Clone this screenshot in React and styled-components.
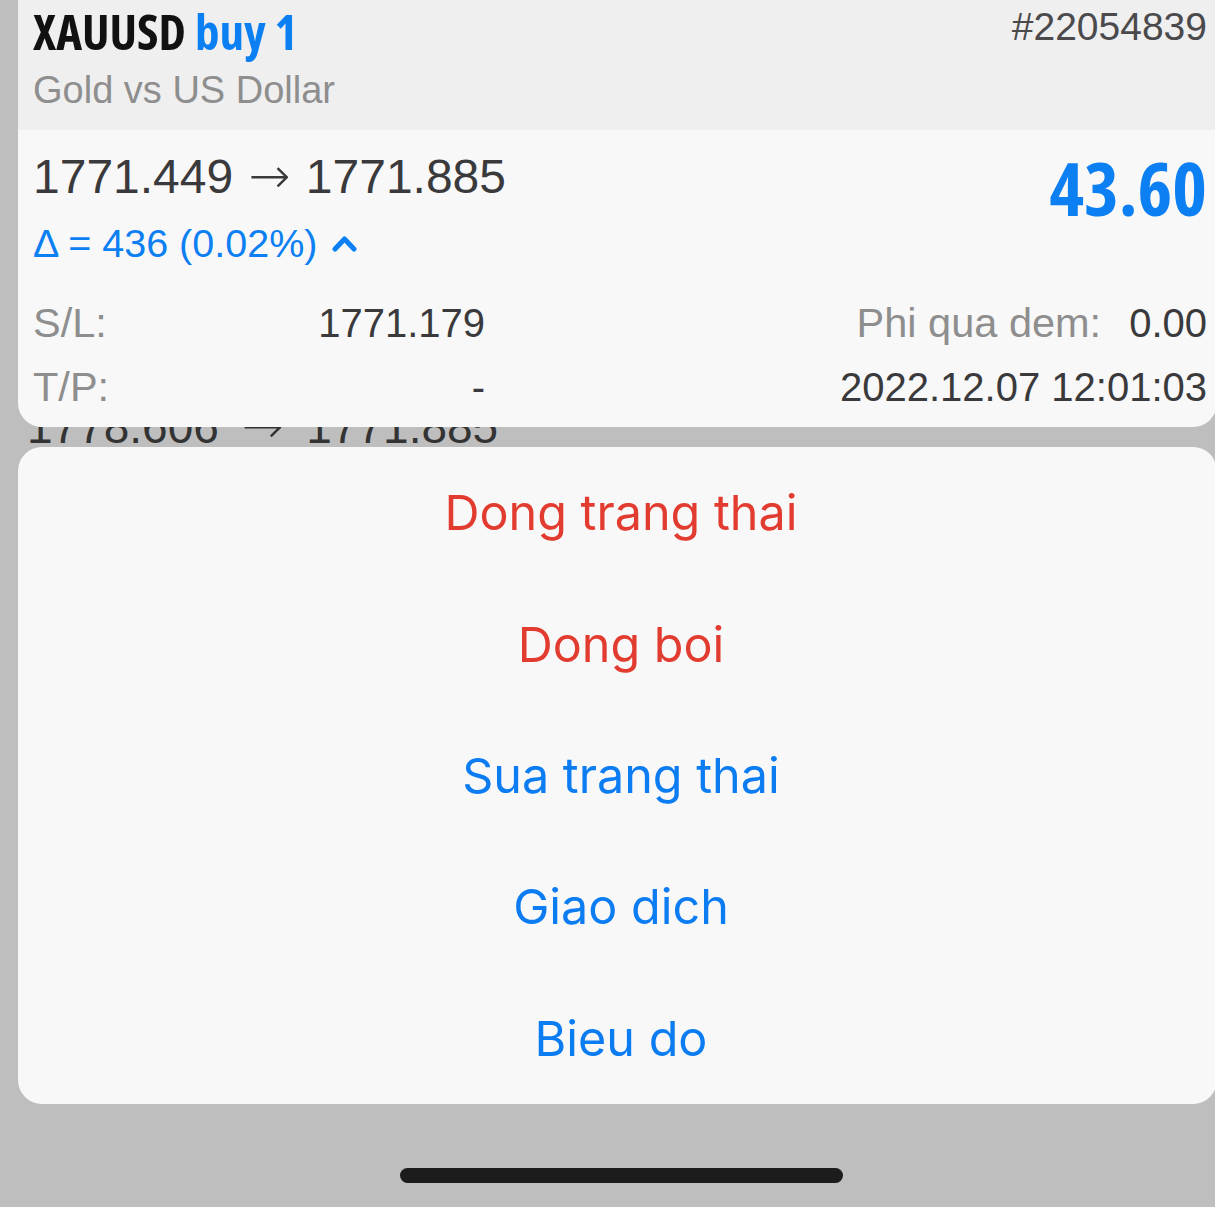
import React from "react";
import styled, { createGlobalStyle } from "styled-components";

const GlobalStyle = createGlobalStyle`
  html, body {
    margin: 0;
    padding: 0;
    background: #bebebe;
    overflow-x: hidden;
  }
  body {
    font-family: "Liberation Sans", Arial, sans-serif;
  }
`;

const Screen = styled.div`
  width: 1215px;
  height: 1207px;
  background: #bebebe;
  display: flex;
  flex-direction: column;
  overflow: hidden;
`;

const Card = styled.div`
  position: relative;
  z-index: 1;
  margin-left: 18px;
  width: 1199px;
  border-radius: 0 0 24px 24px;
  overflow: hidden;
`;

const Header = styled.div`
  height: 130px;
  box-sizing: border-box;
  background: #efefef;
  padding: 0 10px 0 15px;
  display: flex;
  justify-content: space-between;
  align-items: flex-start;
`;

const Title = styled.div`
  font-family: "Open Sans", "DejaVu Sans Condensed", sans-serif;
  font-stretch: 75%;
  font-weight: 700;
  font-size: 49px;
  line-height: 62px;
  color: #111;
  span {
    color: #0c7ff2;
    margin-left: 9px;
  }
`;

const Subtitle = styled.div`
  margin-top: 5px;
  font-size: 38px;
  line-height: 46px;
  color: #8e8e8e;
`;

const Ticket = styled.div`
  padding-top: 4px;
  font-size: 39px;
  line-height: 46px;
  color: #4a4a4c;
`;

const Body = styled.div`
  height: 297px;
  box-sizing: border-box;
  background: #f8f8f8;
  padding: 0 10px 0 15px;
`;

const TopRow = styled.div`
  display: flex;
  justify-content: space-between;
  align-items: flex-start;
`;

const Prices = styled.div`
  padding-top: 18px;
  font-size: 48px;
  line-height: 56px;
  color: #3a3a3c;
  white-space: nowrap;
`;

const Arrow = styled.span`
  font-family: "DejaVu Sans", sans-serif;
  font-weight: 300;
  font-size: 50px;
  margin: 0 2px;
`;

const Delta = styled.div`
  margin-top: 15px;
  font-size: 39.5px;
  line-height: 46px;
  color: #0c7ff2;
  display: flex;
  align-items: center;
  gap: 15px;
`;

const Profit = styled.div`
  padding-top: 18px;
  font-family: "Open Sans", "DejaVu Sans Condensed", sans-serif;
  font-stretch: 75%;
  font-weight: 700;
  font-size: 74px;
  line-height: 80px;
  color: #0c7ff2;
`;

const Info = styled.div`
  margin-top: 25px;
  display: grid;
  grid-template-columns: 452px 1fr;
  grid-auto-rows: 64px;
  font-size: 40px;
  line-height: 64px;
  color: #3a3a3c;
`;

const Pair = styled.div`
  display: flex;
  justify-content: ${(p) => (p.$end ? "flex-end" : "space-between")};
  gap: 28px;
  white-space: nowrap;
`;

const Label = styled.span`
  color: #8e8e8e;
  font-size: 41.5px;
`;

const Strip = styled.div`
  height: 20px;
  overflow: hidden;
  display: flex;
  align-items: flex-end;
  padding-left: 27px;
`;

const Ghost = styled.div`
  font-size: 46px;
  line-height: 48px;
  margin-bottom: -4px;
  color: #333;
  white-space: nowrap;
  word-spacing: 8px;
`;

const Sheet = styled.div`
  margin-left: 18px;
  width: 1199px;
  background: #f8f8f8;
  border-radius: 24px;
  display: flex;
  flex-direction: column;
`;

const Action = styled.div`
  height: 131.4px;
  display: flex;
  align-items: center;
  justify-content: center;
  padding-left: 7px;
  font-family: Inter, "Liberation Sans", sans-serif;
  font-size: 48.5px;
  color: ${(p) => (p.$danger ? "#e23b2f" : "#0c7cf2")};
`;

const HomeBar = styled.div`
  margin: 64px 0 0 400px;
  width: 443px;
  height: 15px;
  border-radius: 8px;
  background: #1c1c1c;
`;

const ChevronUp = () => (
  <svg width="25" height="18" viewBox="0 0 25 18">
    <polyline
      points="3,15 12.5,5 22,15"
      fill="none"
      stroke="#0c7ff2"
      strokeWidth="5"
      strokeLinecap="round"
      strokeLinejoin="round"
    />
  </svg>
);

const actions = [
  { label: "Dong trang thai", danger: true },
  { label: "Dong boi", danger: true },
  { label: "Sua trang thai" },
  { label: "Giao dich" },
  { label: "Bieu do" },
];

export default function App() {
  return (
    <>
      <GlobalStyle />
      <Screen>
        <Card>
          <Header>
            <div>
              <Title>
                XAUUSD<span>buy 1</span>
              </Title>
              <Subtitle>Gold vs US Dollar</Subtitle>
            </div>
            <Ticket>#22054839</Ticket>
          </Header>
          <Body>
            <TopRow>
              <div>
                <Prices>
                  1771.449 <Arrow>→</Arrow> 1771.885
                </Prices>
                <Delta>
                  Δ = 436 (0.02%)
                  <ChevronUp />
                </Delta>
              </div>
              <Profit>43.60</Profit>
            </TopRow>
            <Info>
              <Pair>
                <Label>S/L:</Label>
                <span>1771.179</span>
              </Pair>
              <Pair $end>
                <Label>Phi qua dem:</Label>
                <span>0.00</span>
              </Pair>
              <Pair>
                <Label>T/P:</Label>
                <span>-</span>
              </Pair>
              <Pair $end>
                <span>2022.12.07 12:01:03</span>
              </Pair>
            </Info>
          </Body>
        </Card>
        <Strip>
          <Ghost>
            1778.606 <Arrow>→</Arrow> 1771.885
          </Ghost>
        </Strip>
        <Sheet>
          {actions.map((a) => (
            <Action key={a.label} $danger={a.danger}>
              {a.label}
            </Action>
          ))}
        </Sheet>
        <HomeBar />
      </Screen>
    </>
  );
}
